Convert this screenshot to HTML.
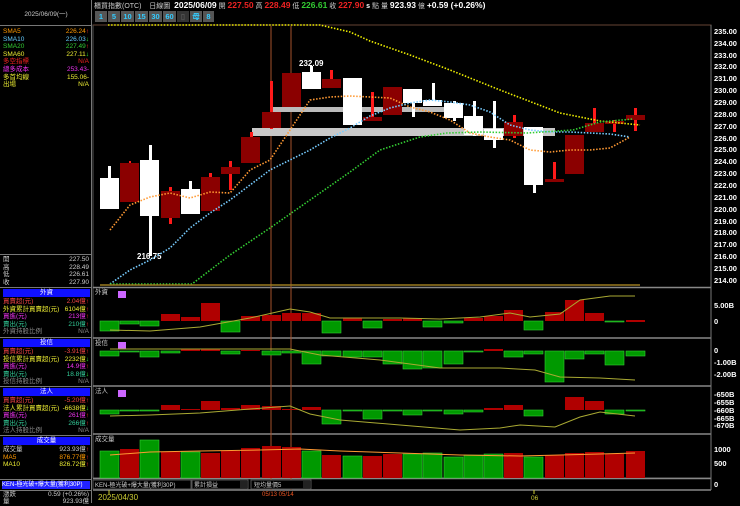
<!DOCTYPE html>
<html><head><meta charset="utf-8"><style>
*{margin:0;padding:0;box-sizing:border-box}
body{width:740px;height:503px;background:#000;overflow:hidden;position:relative;font-family:"Liberation Sans","Noto Sans CJK TC",sans-serif;color:#ccc}
.a{position:absolute;white-space:nowrap}
.r{position:absolute;left:3px;width:86px;font-size:6.5px;line-height:7.6px;height:7.6px}
.r span{position:absolute;right:0}
.hb{position:absolute;left:3px;width:87px;height:8px;background:#1010ff;color:#fff;font-size:6.5px;text-align:center;line-height:8px}
.btn{position:absolute;top:11px;height:11px;background:#555;color:#3cf;font-size:7.5px;text-align:center;line-height:11px;font-weight:bold}
</style></head><body>
<!-- left panel borders -->
<div class="a" style="left:0;top:0;width:92px;height:503px;border-right:1px solid #777"></div>
<div class="a" style="left:0;top:25px;width:92px;border-top:1px solid #777"></div>
<div class="a" style="left:0;top:24px;width:92px;text-align:center;font-size:6.5px;color:#ccc;top:8px">2025/06/09(一)</div>
<div class="r" style="top:28px;color:#f90">SMA5<span>226.24<b style="color:#f33">↑</b></span></div>
<div class="r" style="top:35.6px;color:#6cf">SMA10<span>226.03<b style="color:#3f3">↓</b></span></div>
<div class="r" style="top:43.2px;color:#3c3">SMA20<span>227.49<b style="color:#f33">↑</b></span></div>
<div class="r" style="top:50.8px;color:#ee3">SMA60<span>227.11<b style="color:#3f3">↓</b></span></div>
<div class="r" style="top:58.4px;color:#e22">多空指標<span>N/A</span></div>
<div class="r" style="top:66px;color:#e3e">總多成本<span>253.43-</span></div>
<div class="r" style="top:73.6px;color:#ee3">多首均線<span>155.06-</span></div>
<div class="r" style="top:81.2px;color:#ee3">出場<span>N/A</span></div>
<div class="a" style="left:0;top:254px;width:92px;border-top:1px solid #777"></div>
<div class="r" style="top:256px;color:#ccc">開<span>227.50</span></div>
<div class="r" style="top:263.6px;color:#ccc">高<span>228.49</span></div>
<div class="r" style="top:271.2px;color:#ccc">低<span>226.61</span></div>
<div class="r" style="top:278.8px;color:#ccc">收<span>227.90</span></div>
<div class="a" style="left:0;top:287px;width:92px;border-top:1px solid #777"></div>
<div class="hb" style="top:289px">外資</div>
<div class="r" style="top:298px;color:#e44">買賣超(元)<span>2.04億<b style="color:#f33">↑</b></span></div>
<div class="r" style="top:305.6px;color:#ee3">外資累計買賣超(元)<span>6104億<b style="color:#f33">↑</b></span></div>
<div class="r" style="top:313.2px;color:#e3e">買進(元)<span>213億<b style="color:#f33">↑</b></span></div>
<div class="r" style="top:320.8px;color:#3c9">賣出(元)<span>210億<b style="color:#f33">↑</b></span></div>
<div class="r" style="top:328.4px;color:#888">外資持股比例<span>N/A</span></div>
<div class="a" style="left:0;top:337px;width:92px;border-top:1px solid #777"></div>
<div class="hb" style="top:339px">投信</div>
<div class="r" style="top:348px;color:#e44">買賣超(元)<span>-3.91億<b style="color:#f33">↑</b></span></div>
<div class="r" style="top:355.6px;color:#ee3">投信累計買賣超(元)<span>2232億<b style="color:#3f3">↓</b></span></div>
<div class="r" style="top:363.2px;color:#e3e">買進(元)<span>14.9億<b style="color:#f33">↑</b></span></div>
<div class="r" style="top:370.8px;color:#3c9">賣出(元)<span>18.8億<b style="color:#3f3">↓</b></span></div>
<div class="r" style="top:378.4px;color:#888">投信持股比例<span>N/A</span></div>
<div class="a" style="left:0;top:386px;width:92px;border-top:1px solid #777"></div>
<div class="hb" style="top:388px">法人</div>
<div class="r" style="top:397px;color:#e44">買賣超(元)<span>-5.20億<b style="color:#f33">↑</b></span></div>
<div class="r" style="top:404.6px;color:#ee3">法人累計買賣超(元)<span>-6638億<b style="color:#3f3">↓</b></span></div>
<div class="r" style="top:412.2px;color:#e3e">買進(元)<span>261億<b style="color:#f33">↑</b></span></div>
<div class="r" style="top:419.8px;color:#3c9">賣出(元)<span>266億<b style="color:#f33">↑</b></span></div>
<div class="r" style="top:427.4px;color:#888">法人持股比例<span>N/A</span></div>
<div class="a" style="left:0;top:435px;width:92px;border-top:1px solid #777"></div>
<div class="hb" style="top:437px">成交量</div>
<div class="r" style="top:446px;color:#ccc">成交量<span>923.93億<b style="color:#f33">↑</b></span></div>
<div class="r" style="top:453.6px;color:#f90">MA5<span>876.77億<b style="color:#f33">↑</b></span></div>
<div class="r" style="top:461.2px;color:#ee3">MA10<span>826.72億<b style="color:#f33">↑</b></span></div>
<div class="a" style="left:0;top:479px;width:92px;border-top:1px solid #777"></div>
<div class="a" style="left:2px;top:481px;width:88px;height:8px;background:#22f;color:#fff;font-size:6px;line-height:8px">KEN-極光破+爆大量(獲利30P)</div>
<div class="a" style="left:0;top:490px;width:92px;border-top:1px solid #777"></div>
<div class="r" style="top:491px;color:#ccc">漲跌<span>0.59 (+0.26%)</span></div>
<div class="r" style="top:498px;color:#ccc">量<span>923.93億</span></div>

<!-- top bar -->
<div class="a" style="left:94px;top:1px;font-size:7px;line-height:9px;color:#ccc">櫃買指數(OTC)&nbsp;&nbsp;&nbsp;&nbsp;日線圖&nbsp;&nbsp;<b style="color:#fff;font-size:8.5px">2025/06/09</b> 開 <b style="color:#e22;font-size:8.5px">227.50</b> 高 <b style="color:#e22;font-size:8.5px">228.49</b> 低 <b style="color:#3c3;font-size:8.5px">226.61</b> 收 <b style="color:#e22;font-size:8.5px">227.90</b> <b style="color:#fff">s</b> 點 量 <b style="color:#fff;font-size:8.5px">923.93</b> 億 <b style="color:#fff;font-size:8.5px">+0.59 (+0.26%)</b></div>
<div class="btn" style="left:95px;width:12px">1</div>
<div class="btn" style="left:108px;width:12px">5</div>
<div class="btn" style="left:121px;width:13px">10</div>
<div class="btn" style="left:135px;width:13px">15</div>
<div class="btn" style="left:149px;width:13px">30</div>
<div class="btn" style="left:163px;width:13px">60</div>
<div class="btn" style="left:177px;width:12px;background:#333;color:#555">▯</div>
<div class="btn" style="left:190px;width:12px">母</div>
<div class="btn" style="left:203px;width:11px">8</div>

<svg class="a" style="left:0;top:0" width="740" height="503" font-family="Liberation Sans" >
<rect x="93" y="25" width="618" height="453" fill="none" stroke="#555"/>
<line x1="93" y1="25" x2="711" y2="25" stroke="#643" />
<g stroke="#888" stroke-width="1.5">
<line x1="93" y1="287.5" x2="711" y2="287.5"/><line x1="93" y1="338" x2="711" y2="338"/>
<line x1="93" y1="386" x2="711" y2="386"/><line x1="93" y1="434" x2="711" y2="434"/>
<line x1="93" y1="478.5" x2="711" y2="478.5"/><line x1="93" y1="490" x2="711" y2="490"/>
</g>
<line x1="711" y1="25" x2="711" y2="490" stroke="#777"/>
<!-- right axis -->
<g fill="#fff" font-size="7.5" font-weight="bold">
<text x="714" y="34">235.00</text><text x="714" y="46">234.00</text><text x="714" y="58">233.00</text><text x="714" y="69">232.00</text><text x="714" y="81">231.00</text><text x="714" y="93">230.00</text><text x="714" y="105">229.00</text><text x="714" y="117">228.00</text><text x="714" y="129">227.00</text><text x="714" y="141">226.00</text><text x="714" y="152">225.00</text><text x="714" y="164">224.00</text><text x="714" y="176">223.00</text><text x="714" y="188">222.00</text><text x="714" y="200">221.00</text><text x="714" y="212">220.00</text><text x="714" y="224">219.00</text><text x="714" y="235">218.00</text><text x="714" y="247">217.00</text><text x="714" y="259">216.00</text><text x="714" y="271">215.00</text><text x="714" y="283">214.00</text>
<text x="714" y="308">5.00B</text><text x="714" y="324">0</text>
<text x="714" y="353">0</text><text x="714" y="365">-1.00B</text><text x="714" y="377">-2.00B</text>
<text x="714" y="397">-650B</text><text x="714" y="405">-655B</text><text x="714" y="413">-660B</text><text x="714" y="421">-665B</text><text x="714" y="428">-670B</text>
<text x="714" y="452">1000</text><text x="714" y="466">500</text><text x="714" y="487">0</text>
</g>
<!-- vertical markers -->
<line x1="271" y1="26" x2="271" y2="490" stroke="#a5522d"/>
<line x1="291" y1="26" x2="291" y2="490" stroke="#a5522d"/>
<!-- gray bars -->
<rect x="270" y="107" width="175" height="5" fill="#bbb"/>
<rect x="252" y="128" width="303" height="8" fill="#c8c8c8"/>
<!-- wicks -->
<g fill="#ff1a1a">
<rect x="129" y="161" width="2" height="3"/><rect x="169" y="187" width="3" height="37"/><rect x="209" y="173" width="3" height="5"/>
<rect x="229" y="161" width="3" height="29"/><rect x="250" y="132" width="3" height="6"/><rect x="270" y="81" width="3" height="48"/>
<rect x="330" y="70" width="3" height="10"/><rect x="371" y="92" width="3" height="29"/><rect x="513" y="115" width="3" height="23"/>
<rect x="553" y="162" width="3" height="18"/><rect x="593" y="108" width="3" height="24"/><rect x="613" y="120" width="3" height="12"/><rect x="634" y="108" width="3" height="23"/>
</g>
<g fill="#fff">
<rect x="108" y="166" width="3" height="13"/><rect x="149" y="145" width="3" height="111"/><rect x="189" y="181" width="3" height="9"/>
<rect x="310" y="66" width="3" height="7"/><rect x="412" y="103" width="3" height="14"/><rect x="432" y="83" width="3" height="22"/>
<rect x="453" y="101" width="3" height="20"/><rect x="473" y="101" width="3" height="35"/><rect x="493" y="101" width="3" height="47"/><rect x="533" y="185" width="3" height="8"/>
</g>
<!-- bodies -->
<g fill="#8b0000">
<rect x="120" y="163" width="19" height="39"/><rect x="161" y="191" width="19" height="27"/><rect x="201" y="177" width="19" height="34"/>
<rect x="221" y="167" width="19" height="7"/><rect x="241" y="137" width="19" height="26"/><rect x="262" y="112" width="19" height="16"/>
<rect x="282" y="73" width="19" height="34"/><rect x="322" y="79" width="19" height="9"/><rect x="363" y="117" width="19" height="4"/>
<rect x="383" y="87" width="19" height="28"/><rect x="504" y="122" width="19" height="14"/><rect x="545" y="179" width="19" height="3"/>
<rect x="565" y="135" width="19" height="39"/><rect x="585" y="123" width="19" height="9"/><rect x="605" y="121" width="19" height="3"/><rect x="626" y="115" width="19" height="5"/>
</g>
<g fill="#fff">
<rect x="100" y="178" width="19" height="31"/><rect x="140" y="160" width="19" height="56"/><rect x="181" y="189" width="19" height="25"/>
<rect x="302" y="72" width="19" height="17"/><rect x="343" y="78" width="19" height="47"/><rect x="403" y="89" width="19" height="14"/>
<rect x="423" y="100" width="19" height="6"/><rect x="444" y="103" width="19" height="15"/><rect x="464" y="116" width="19" height="19"/>
<rect x="484" y="129" width="19" height="11"/><rect x="524" y="127" width="19" height="58"/>
</g>
<text x="299" y="66" fill="#fff" font-size="8" font-weight="bold">232.09</text>
<text x="137" y="259" fill="#fff" font-size="8" font-weight="bold">216.75</text>
<!-- MAs -->
<g fill="none" stroke-width="1.6" stroke-dasharray="1.5 1.6">
<polyline stroke="#ee0" points="108,25 320,25 350,32 370,41 410,55 450,70 500,90 560,113 600,121 640,125"/>
<polyline stroke="#f93" points="110,230 130,205 150,197 170,193 190,198 210,192 230,193 250,170 270,160 290,130 310,100 330,97 350,96 370,97 390,98 410,107 430,112 450,120 470,133 490,137 510,140 530,150 550,152 570,150 590,150 610,148 630,137"/>
<polyline stroke="#7cf" points="110,284 130,270 150,260 170,248 190,228 210,213 230,200 250,185 270,170 290,160 310,150 330,138 350,128 370,116 390,108 410,103 430,100 450,102 470,105 490,112 510,125 530,130 550,132 570,132 590,133 610,134 630,137"/>
<polyline stroke="#3c3" points="110,284 192,284 230,255 270,228 310,200 350,172 380,150 420,137 447,133 480,132 527,133 573,130 600,122 633,119"/>
</g>
<line x1="100" y1="285" x2="640" y2="285" stroke="#9a7a20" stroke-width="1.5"/>
<!-- foreign panel -->
<rect x="118" y="291" width="8" height="7" fill="#c6f"/>
<text x="95" y="294" fill="#ccc" font-size="6.5">外資</text>
<g fill="#b00000">
<rect x="161" y="314" width="19" height="7"/><rect x="181" y="317" width="19" height="4"/><rect x="201" y="303" width="19" height="18"/><rect x="241" y="316" width="19" height="5"/><rect x="262" y="315" width="19" height="6"/><rect x="282" y="313" width="19" height="8"/><rect x="302" y="313" width="19" height="8"/><rect x="343" y="318" width="19" height="3"/><rect x="383" y="319" width="19" height="2"/><rect x="403" y="318" width="19" height="3"/><rect x="464" y="318" width="19" height="3"/><rect x="484" y="316" width="19" height="5"/><rect x="504" y="310" width="19" height="11"/><rect x="545" y="312" width="19" height="9"/><rect x="565" y="300" width="19" height="21"/><rect x="585" y="313" width="19" height="8"/><rect x="626" y="320" width="19" height="2"/></g>
<g fill="#090" stroke="#3c3" stroke-width=".6">
<rect x="100" y="321" width="19" height="10"/><rect x="120" y="321" width="19" height="3"/><rect x="140" y="321" width="19" height="5"/><rect x="221" y="321" width="19" height="11"/><rect x="322" y="321" width="19" height="12"/><rect x="363" y="321" width="19" height="7"/><rect x="423" y="321" width="19" height="6"/><rect x="444" y="321" width="19" height="2"/><rect x="524" y="321" width="19" height="9"/><rect x="605" y="321" width="19" height="1"/></g>
<polyline fill="none" stroke="#aa3" stroke-width="1" points="110,330 150,331 200,327 250,318 290,309 310,312 330,318 360,318 400,318 440,319 480,317 510,313 530,317 560,314 580,300 610,296 635,296"/>
<!-- trust panel -->
<rect x="118" y="342" width="8" height="7" fill="#c6f"/>
<text x="95" y="345" fill="#ccc" font-size="6.5">投信</text>
<g fill="#b00000"><rect x="181" y="349" width="19" height="2"/><rect x="201" y="349" width="19" height="2"/><rect x="241" y="350" width="19" height="1"/><rect x="484" y="349" width="19" height="2"/></g>
<g fill="#090" stroke="#3c3" stroke-width=".6">
<rect x="100" y="351" width="19" height="5"/><rect x="120" y="351" width="19" height="1"/><rect x="140" y="351" width="19" height="6"/><rect x="161" y="351" width="19" height="2"/><rect x="221" y="351" width="19" height="3"/><rect x="262" y="351" width="19" height="4"/><rect x="282" y="351" width="19" height="2"/><rect x="302" y="351" width="19" height="13"/><rect x="322" y="351" width="19" height="5"/><rect x="343" y="351" width="19" height="6"/><rect x="363" y="351" width="19" height="6"/><rect x="383" y="351" width="19" height="13"/><rect x="403" y="351" width="19" height="18"/><rect x="423" y="351" width="19" height="17"/><rect x="444" y="351" width="19" height="13"/><rect x="464" y="351" width="19" height="1"/><rect x="504" y="351" width="19" height="6"/><rect x="524" y="351" width="19" height="3"/><rect x="545" y="351" width="19" height="31"/><rect x="565" y="351" width="19" height="8"/><rect x="585" y="351" width="19" height="3"/><rect x="605" y="351" width="19" height="14"/><rect x="626" y="351" width="19" height="5"/></g>
<polyline fill="none" stroke="#aa3" stroke-width="1" points="110,349 290,349 320,355 380,360 440,368 470,368 500,368 535,370 560,377 600,378 635,380"/>
<!-- legal panel -->
<rect x="118" y="390" width="8" height="7" fill="#c6f"/>
<text x="95" y="393" fill="#ccc" font-size="6.5">法人</text>
<g fill="#b00000"><rect x="161" y="405" width="19" height="5"/><rect x="181" y="409" width="19" height="1"/><rect x="201" y="401" width="19" height="9"/><rect x="221" y="408" width="19" height="2"/><rect x="241" y="405" width="19" height="5"/><rect x="262" y="406" width="19" height="4"/><rect x="282" y="409" width="19" height="1"/><rect x="302" y="407" width="19" height="3"/><rect x="484" y="408" width="19" height="2"/><rect x="504" y="405" width="19" height="5"/><rect x="565" y="397" width="19" height="13"/><rect x="585" y="401" width="19" height="9"/></g>
<g fill="#090" stroke="#3c3" stroke-width=".6">
<rect x="100" y="410" width="19" height="4"/><rect x="120" y="410" width="19" height="1"/><rect x="140" y="410" width="19" height="1"/><rect x="322" y="410" width="19" height="14"/><rect x="343" y="410" width="19" height="1"/><rect x="363" y="410" width="19" height="9"/><rect x="383" y="410" width="19" height="1"/><rect x="403" y="410" width="19" height="5"/><rect x="423" y="410" width="19" height="1"/><rect x="444" y="410" width="19" height="4"/><rect x="464" y="410" width="19" height="2"/><rect x="524" y="410" width="19" height="6"/><rect x="605" y="410" width="19" height="4"/><rect x="626" y="410" width="19" height="1"/></g>
<polyline fill="none" stroke="#aa3" stroke-width="1" points="110,416 150,415 200,413 250,409 290,406 310,414 340,420 400,425 460,430 500,428 520,425 555,427 580,417 600,412 635,416"/>
<!-- volume -->
<text x="95" y="441" fill="#ccc" font-size="6.5">成交量</text>
<g fill="#b00000"><rect x="120" y="449" width="19" height="29"/><rect x="161" y="452" width="19" height="26"/><rect x="201" y="453" width="19" height="25"/><rect x="221" y="451" width="19" height="27"/><rect x="241" y="448" width="19" height="30"/><rect x="262" y="446" width="19" height="32"/><rect x="282" y="447" width="19" height="31"/><rect x="322" y="455" width="19" height="23"/><rect x="363" y="456" width="19" height="22"/><rect x="383" y="454" width="19" height="24"/><rect x="504" y="453" width="19" height="25"/><rect x="545" y="455" width="19" height="23"/><rect x="565" y="453" width="19" height="25"/><rect x="585" y="452" width="19" height="26"/><rect x="605" y="454" width="19" height="24"/><rect x="626" y="451" width="19" height="27"/></g>
<g fill="#090" stroke="#3c3" stroke-width=".6"><rect x="100" y="451" width="19" height="27"/><rect x="140" y="440" width="19" height="38"/><rect x="181" y="452" width="19" height="26"/><rect x="302" y="451" width="19" height="27"/><rect x="343" y="456" width="19" height="22"/><rect x="403" y="454" width="19" height="24"/><rect x="423" y="453" width="19" height="25"/><rect x="444" y="457" width="19" height="21"/><rect x="464" y="455" width="19" height="23"/><rect x="484" y="454" width="19" height="24"/><rect x="524" y="457" width="19" height="21"/></g>
<polyline fill="none" stroke="#f93" stroke-width="1" points="110,455 150,452 200,451 260,450 300,449 340,451 400,453 460,455 520,456 560,455 600,454 635,453"/>
<!-- bottom bar -->
<rect x="93" y="480" width="98" height="9" fill="#000" stroke="#555"/>
<text x="95" y="487" fill="#ccc" font-size="6">KEN-極光破+爆大量(獲利30P)</text>
<rect x="192" y="480" width="56" height="9" fill="#000" stroke="#555"/>
<text x="194" y="487" fill="#ccc" font-size="6">累計損益</text><rect x="240" y="481" width="7" height="7" fill="#222"/>
<rect x="251" y="480" width="60" height="9" fill="#000" stroke="#555"/>
<text x="254" y="487" fill="#ccc" font-size="6">短均量價5</text><rect x="303" y="481" width="7" height="7" fill="#222"/>
<line x1="109" y1="490" x2="109" y2="494" stroke="#cc3"/>
<text x="98" y="500" fill="#cc3" font-size="8">2025/04/30</text>
<text x="262" y="496" fill="#e52" font-size="6">05/13 05/14</text>
<line x1="534" y1="490" x2="534" y2="494" stroke="#cc3"/>
<text x="531" y="500" fill="#cc3" font-size="6.5">06</text>
</svg>
</body></html>
